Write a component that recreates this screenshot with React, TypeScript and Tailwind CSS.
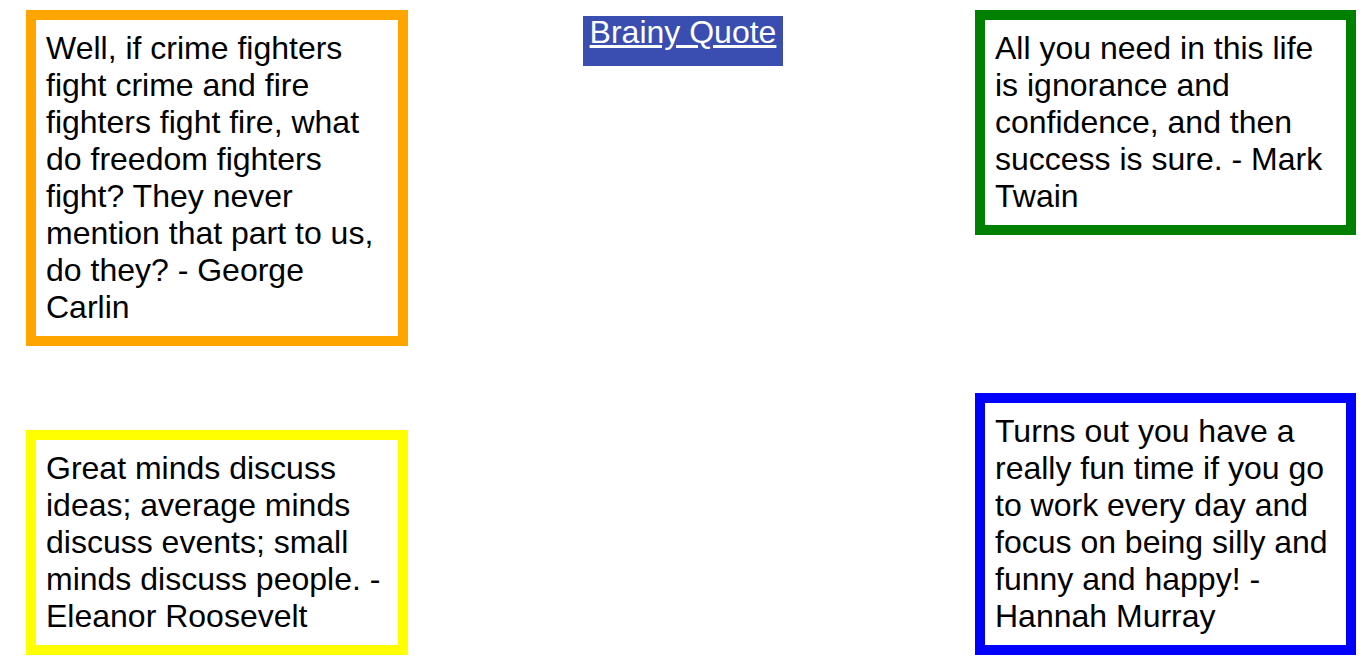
const QUOTES = {
  orange:
    'Well, if crime fighters fight crime and fire fighters fight fire, what do freedom fighters fight? They never mention that part to us, do they? - George Carlin',
  green:
    'All you need in this life is ignorance and confidence, and then success is sure. - Mark Twain',
  yellow:
    'Great minds discuss ideas; average minds discuss events; small minds discuss people. - Eleanor Roosevelt',
  blue: 'Turns out you have a really fun time if you go to work every day and focus on being silly and funny and happy! - Hannah Murray',
};

function QuoteBox({ text, className }: { text: string; className: string }) {
  return (
    <div className={`border-[10px] bg-white p-[10px] text-[32px] leading-[37px] text-black ${className}`}>
      {text}
    </div>
  );
}

export default function App() {
  return (
    <div
      className="flex h-screen flex-col justify-between bg-white pt-[10px] pb-[10px]"
      style={{ fontFamily: '"Liberation Sans", Arial, sans-serif' }}
    >
      <div className="grid grid-cols-[1fr_auto_1fr] items-start">
        <div className="ml-[26px] justify-self-start">
          <QuoteBox text={QUOTES.orange} className="w-[382px] border-[#ffa500]" />
        </div>
        <a
          href="#"
          className="mt-[6px] block h-[50px] w-[200px] bg-[#3a4db1] text-center text-[32px] leading-[33px] text-white underline"
        >
          Brainy Quote
        </a>
        <div className="mr-[10px] justify-self-end">
          <QuoteBox text={QUOTES.green} className="w-[381px] border-[#008000]" />
        </div>
      </div>
      <div className="flex items-end justify-between pl-[26px] pr-[10px]">
        <QuoteBox text={QUOTES.yellow} className="w-[382px] border-[#ffff00]" />
        <QuoteBox text={QUOTES.blue} className="w-[381px] border-[#0000ff]" />
      </div>
    </div>
  );
}
